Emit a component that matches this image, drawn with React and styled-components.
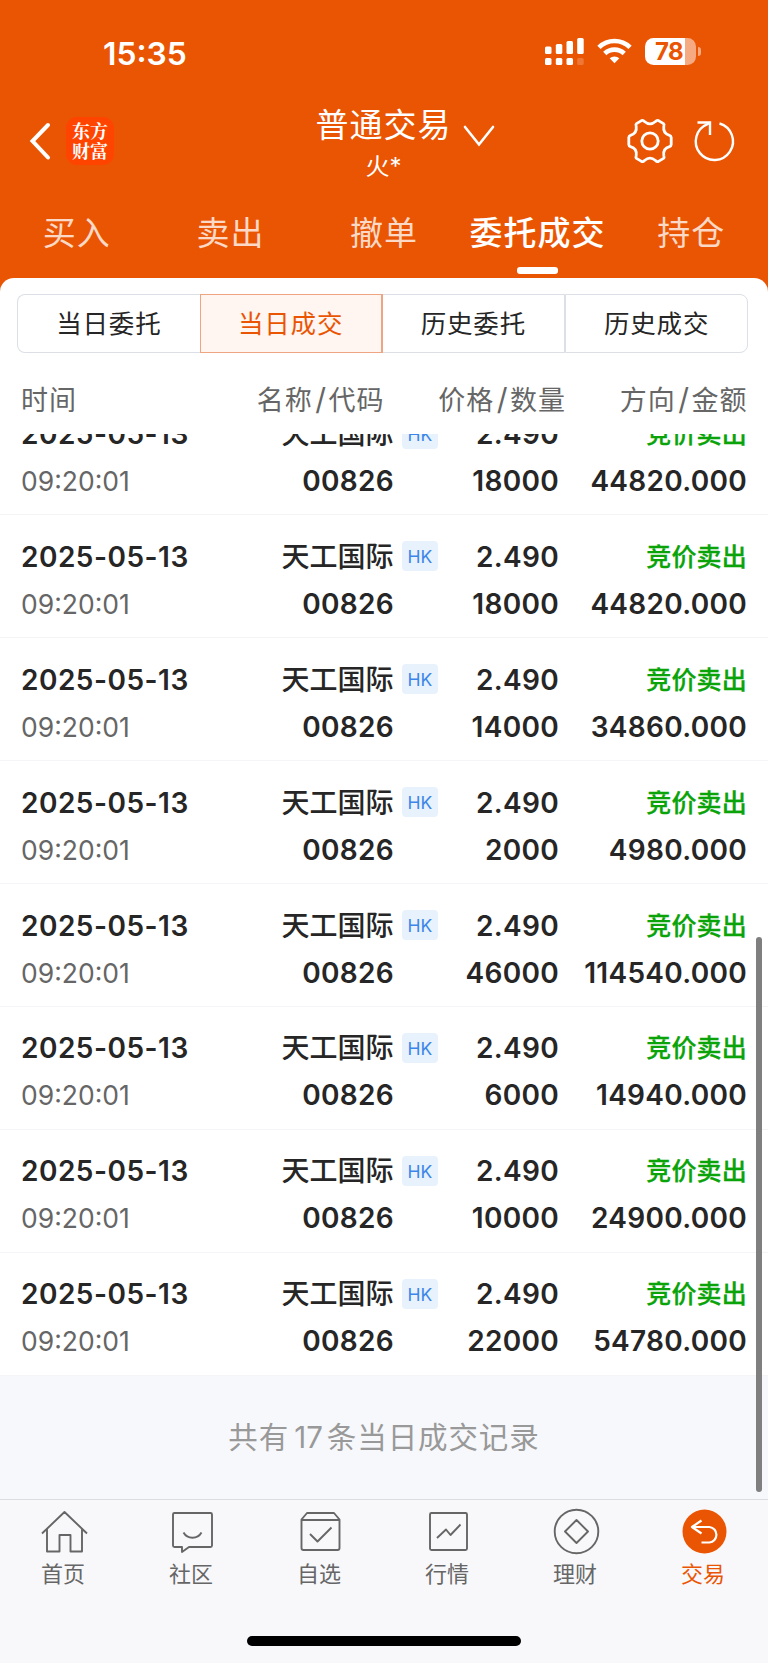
import React from "react";
import styled, { createGlobalStyle, css } from "styled-components";

const tabs = ["买入", "卖出", "撤单", "委托成交", "持仓"];
const filters = ["当日委托", "当日成交", "历史委托", "历史成交"];
const deals = [
  { amount: "18000", total: "44820.000" },
  { amount: "18000", total: "44820.000" },
  { amount: "14000", total: "34860.000" },
  { amount: "2000", total: "4980.000" },
  { amount: "46000", total: "114540.000" },
  { amount: "6000", total: "14940.000" },
  { amount: "10000", total: "24900.000" },
  { amount: "22000", total: "54780.000" },
];

const menu = [
  {
    label: "首页",
    icon: (
      <path d="M2 23.5 24.5 2 47 23.5M7 19v22.500h12.500V25h11v16.500H42V19" />
    ),
  },
  {
    label: "社区",
    icon: (
      <>
        <path d="M6.500 3h36q1.500 0 1.500 1.500v31q0 1.500-1.500 1.500H21l-7 5v-5H6.500Q5 37 5 35.500v-31Q5 3 6.500 3z" />
        <path d="M15.500 22.500c4 7 14 7 18 0" />
      </>
    ),
  },
  {
    label: "自选",
    icon: (
      <>
        <path d="M5.500 9.500 11 3h27l5.500 6.500v28.500q0 2-2 2h-34q-2 0-2-2zM5.500 10h38" />
        <path d="m14 24 7.500 7.500L35.500 17.500" />
      </>
    ),
  },
  {
    label: "行情",
    icon: (
      <>
        <rect x="6" y="3" width="37" height="37" rx="1.500" />
        <path d="m13 28 9-8.500 4.500 5.500 10-10.500" />
      </>
    ),
  },
  {
    label: "理财",
    icon: (
      <>
        <circle cx="24.500" cy="21.500" r="21.800" />
        <path d="M24.500 10 36 21.500 24.500 33 13 21.500z" />
      </>
    ),
  },
  {
    label: "交易",
    active: true,
    icon: (
      <>
        <circle cx="24.500" cy="21.500" r="22" fill="#ea5504" stroke="none" />
        <path
          d="M21.500 10.500 12 17l9.500 6.500M12 17h17.500a7.800 7.800 0 0 1 0 15.500H21.500"
          stroke="#fff"
          strokeWidth="2.200"
        />
      </>
    ),
  },
];

function StatusBar() {
  return (
    <Status>
      <Clock>15:35</Clock>
      <StatusIcons>
        <svg width="39" height="27" viewBox="0 0 39 27" fill="#fff">
          <rect x="0" y="8.500" width="6.500" height="7.500" rx="1.500" />
          <rect x="10.800" y="6" width="6.500" height="10" rx="1.500" />
          <rect x="21.500" y="3" width="6.500" height="13" rx="1.500" />
          <rect x="32.200" y="0" width="6.500" height="16" rx="1.500" />
          <rect x="0" y="20" width="6.500" height="7" rx="1.500" />
          <rect x="10.800" y="20" width="6.500" height="7" rx="1.500" />
          <rect x="21.500" y="20" width="6.500" height="7" rx="1.500" />
          <rect x="32.200" y="20" width="6.500" height="7" rx="1.500" opacity=".2" />
        </svg>
        <svg width="35" height="26" viewBox="0 0 36 26" fill="none" stroke="#fff" strokeWidth="4.800">
          <path d="M2 9.200a23 23 0 0 1 32 0" />
          <path d="M8 15.600a14.500 14.500 0 0 1 20 0" />
          <path d="M18 25.500l-5-5a7.400 7.400 0 0 1 10 0z" fill="#fff" stroke="none" />
        </svg>
        <Battery>
          <Charge>78</Charge>
        </Battery>
      </StatusIcons>
    </Status>
  );
}

function Header() {
  return (
    <Bar>
      <BarSide>
        <svg width="22" height="38" viewBox="0 0 22 38" fill="none" stroke="#fff" strokeWidth="4" strokeLinecap="round">
          <path d="M19 3 3.500 19 19 35.500" />
        </svg>
        <Logo>
          <span>东方</span>
          <span>财富</span>
        </Logo>
      </BarSide>
      <Heading>
        <div>
          <Title>普通交易</Title>
          <Account>火*</Account>
        </div>
        <svg width="32" height="22" viewBox="0 0 32 22" fill="none" stroke="#fff" strokeWidth="2.600" strokeLinecap="round">
          <path d="M2 2 16 19.500 30 2" />
        </svg>
      </Heading>
      <BarSide $end>
        <svg width="46" height="46" viewBox="0 0 46 46" fill="none" stroke="#fff" strokeWidth="2.800" strokeLinejoin="round">
          <path d="M14.500 2.600 Q16 1.800 17.500 3.500 Q23 8.300 28.500 3.500 Q30 1.800 31.500 2.600 L36.500 5.600 Q37.500 6.400 36.800 8.500 Q35.800 15.500 42.500 17.300 Q44 17.800 44.200 19.500 V26.500 Q44 28.200 42.500 28.700 Q35.800 30.500 36.800 37.500 Q37.500 39.600 36.500 40.400 L31.500 43.400 Q30 44.200 28.500 42.500 Q23 37.700 17.500 42.500 Q16 44.200 14.500 43.400 L9.500 40.400 Q8.500 39.600 9.200 37.500 Q10.200 30.500 3.500 28.700 Q2 28.200 1.800 26.500 V19.500 Q2 17.800 3.500 17.300 Q10.200 15.500 9.200 8.500 Q8.500 6.400 9.500 5.600 Z" />
          <circle cx="23" cy="23" r="8.200" />
        </svg>
        <svg width="42" height="42" viewBox="0 0 42 42" fill="none" stroke="#fff" strokeWidth="2.400">
          <path d="M25.500 3.500a18.600 18.600 0 1 1-12 .6L16 2.500" />
          <path d="M3.500 2.500h12.500V15" />
        </svg>
      </BarSide>
    </Bar>
  );
}

function Deal({ amount, total }) {
  return (
    <Row>
      <Cell $left>
        <DateText>2025-05-13</DateText>
        <Time>09:20:01</Time>
      </Cell>
      <Cell>
        <Name>
          天工国际<Market>HK</Market>
        </Name>
        <Code>00826</Code>
      </Cell>
      <Cell>
        <Strong>2.490</Strong>
        <Strong>{amount}</Strong>
      </Cell>
      <Cell>
        <Side>竞价卖出</Side>
        <Strong>{total}</Strong>
      </Cell>
    </Row>
  );
}

export default function App() {
  return (
    <Screen>
      <GlobalStyle />
      <Top>
        <StatusBar />
        <Header />
        <Tabs>
          {tabs.map((tab) => (
            <Tab key={tab} $active={tab === "委托成交"}>
              {tab}
            </Tab>
          ))}
        </Tabs>
      </Top>
      <Panel>
        <Filters>
          {filters.map((filter) => (
            <Filter key={filter} $active={filter === "当日成交"}>
              {filter}
            </Filter>
          ))}
        </Filters>
        <Columns>
          <span>时间</span>
          <span>
            名称<Slash>/</Slash>代码
          </span>
          <span>
            价格<Slash>/</Slash>数量
          </span>
          <span>
            方向<Slash>/</Slash>金额
          </span>
        </Columns>
        <Scroller>
          <List>
            {deals.map((deal, i) => (
              <Deal key={i} {...deal} />
            ))}
          </List>
          <Summary>
            共有<Count>17</Count>条当日成交记录
          </Summary>
          <Thumb />
        </Scroller>
      </Panel>
      <Menu>
        {menu.map(({ label, icon, active }) => (
          <MenuItem key={label} $active={active}>
            <svg width="49" height="45" viewBox="0 0 49 45" fill="none" stroke="currentColor" strokeWidth="1.900" strokeLinejoin="round">
              {icon}
            </svg>
            <Label>{label}</Label>
          </MenuItem>
        ))}
      </Menu>
      <Foot>
        <HomeBar />
      </Foot>
    </Screen>
  );
}

const GlobalStyle = createGlobalStyle`
  * {
    box-sizing: border-box;
  }

  body {
    margin: 0;
    font-family: Inter, "Noto Sans CJK SC", sans-serif;
    color: #262626;
  }

  svg {
    display: block;
    flex: none;
    overflow: visible;
  }
`;

const Screen = styled.div`
  display: flex;
  flex-direction: column;
  width: 768px;
  height: 1663px;
  background: #f7f8fb;
  overflow: hidden;
  white-space: nowrap;
`;

const Top = styled.header`
  height: 292px;
  flex: none;
  background: #ea5504;
  color: #fff;
`;

const Status = styled.div`
  display: flex;
  justify-content: space-between;
  height: 100px;
  padding: 38px 72px 0 103px;
`;
const Clock = styled.div`
  font-size: 31.8px;
  font-weight: 600;
  line-height: 31px;
`;
const StatusIcons = styled.div`
  display: flex;
  align-items: flex-start;
  gap: 13px;
`;
const Battery = styled.div`
  position: relative;
  width: 51px;
  height: 27px;
  border-radius: 8.5px;
  background: linear-gradient(to right, #fff 40px, #f5aa82 40px);

  &::after {
    content: "";
    position: absolute;
    right: -5px;
    top: 9px;
    width: 3px;
    height: 9px;
    border-radius: 0 4px 4px 0;
    background: #f5aa82;
  }
`;
const Charge = styled.div`
  padding-left: 10px;
  font-size: 24px;
  font-weight: 700;
  line-height: 28px;
  letter-spacing: -0.5px;
  color: #ea5504;
`;

const Bar = styled.div`
  display: grid;
  grid-template-columns: 240px 1fr 240px;
  height: 94px;
`;
const BarSide = styled.div`
  display: flex;
  align-items: center;
  height: 81px;
  gap: 15px;
  padding: 0 29px;
  ${(props) =>
    props.$end &&
    css`
      justify-content: flex-end;
      gap: 21px;
      padding-right: 32px;
    `}
`;
const Logo = styled.div`
  display: flex;
  flex-direction: column;
  justify-content: center;
  align-items: center;
  width: 48px;
  height: 48px;
  padding-bottom: 1px;
  border-radius: 11px;
  background: #ff4400;
  font-family: "Noto Serif CJK SC", "Noto Sans CJK SC", sans-serif;
  font-size: 18px;
  font-weight: 700;
  line-height: 20px;
`;
const Heading = styled.div`
  display: flex;
  justify-content: center;
  gap: 11px;
  padding: 1px 0 0 42px;
  text-align: center;

  svg {
    margin-top: 24px;
  }
`;
const Title = styled.div`
  font-size: 33px;
  line-height: 48px;
  letter-spacing: 1px;
`;
const Account = styled.div`
  font-size: 24px;
  line-height: 36px;
`;

const Tabs = styled.nav`
  display: grid;
  grid-template-columns: repeat(5, 1fr);
`;
const Tab = styled.div`
  position: relative;
  height: 80px;
  font-size: 33px;
  line-height: 78px;
  letter-spacing: 1px;
  text-align: center;
  color: #fcd9c6;
  ${(props) =>
    props.$active &&
    css`
      color: #fff;
      font-weight: 500;

      &::after {
        content: "";
        position: absolute;
        left: 56px;
        top: 73px;
        width: 41px;
        height: 7px;
        border-radius: 3px;
        background: #fff;
      }
    `}
`;

const Panel = styled.main`
  display: flex;
  flex-direction: column;
  height: 1221px;
  margin-top: -14px;
  flex: none;
  padding-top: 16px;
  border-radius: 14px 14px 0 0;
  background: #fff;
`;
const Filters = styled.div`
  display: grid;
  grid-template-columns: repeat(4, 1fr);
  height: 57.5px;
  margin: 0 20px 0.5px 17px;
`;
const Filter = styled.div`
  border: 1.5px solid #dcdfe6;
  font-size: 25.5px;
  line-height: 57px;
  letter-spacing: 0.8px;
  text-align: center;

  &:first-child {
    border-radius: 8px 0 0 8px;
    border-right: 0;
  }

  &:nth-child(3) {
    border-left: 0;
  }

  &:last-child {
    border-radius: 0 8px 8px 0;
  }
  ${(props) =>
    props.$active &&
    css`
      border-color: #f0a582;
      border-right-width: 2px;
      background: #fff5f1;
      color: #ea5504;
    `}
`;
const Columns = styled.div`
  display: grid;
  grid-template-columns: 172px 191.5px 181.5px 181.5px;
  height: 81.5px;
  padding-left: 21px;
  font-size: 27px;
  line-height: 97px;
  letter-spacing: 1px;
  text-align: right;
  color: #666;

  span:first-child {
    text-align: left;
  }
`;
const Slash = styled.i`
  margin: 0 1.5px 0 2.5px;
  font-size: 30px;
  font-style: normal;
  line-height: 1;
`;

const Scroller = styled.div`
  position: relative;
  flex: 1;
`;
const List = styled.div`
  display: flex;
  flex-direction: column;
  justify-content: flex-end;
  height: 942px;
  overflow: hidden;
`;
const Row = styled.article`
  display: grid;
  grid-template-columns: 172px 245px 121px 188px;
  flex: none;
  height: 122.88px;
  padding: 18.5px 21px 0;
  border-bottom: 1.5px solid #f5f5f7;
`;
const Cell = styled.div`
  line-height: 47px;
  font-size: 28px;
  text-align: ${(props) => (props.$left ? "left" : "right")};
`;
const Strong = styled.div`
  font-weight: 600;
  letter-spacing: 0.3px;
`;
const DateText = styled(Strong)`
  letter-spacing: 0.5px;
`;
const Time = styled.div`
  font-size: 26.5px;
  color: #666;
`;
const Name = styled.div`
  display: flex;
  align-items: center;
  justify-content: flex-end;
  gap: 8.5px;
  height: 47px;
  font-weight: 500;
`;
const Code = styled(Strong)`
  padding-right: 44px;
`;
const Market = styled.span`
  width: 36px;
  height: 30px;
  margin-bottom: 2px;
  border-radius: 4px;
  background: #e8f2fd;
  font-size: 17.5px;
  font-weight: 400;
  line-height: 31px;
  text-align: center;
  color: #3b86e8;
`;
const Side = styled.div`
  font-size: 25px;
  font-weight: 500;
  line-height: 46px;
  margin-bottom: 1px;
  letter-spacing: 0.2px;
  color: #0aa30a;
  -webkit-text-stroke: 0.3px #0aa30a;
`;
const Summary = styled.div`
  height: 123.5px;
  background: #f7f8fb;
  font-size: 29.5px;
  line-height: 123px;
  letter-spacing: 0.9px;
  text-align: center;
  color: #999;
`;
const Count = styled.span`
  margin: 0 4px 0 5px;
  letter-spacing: 0;
`;
const Thumb = styled.div`
  position: absolute;
  top: 503.5px;
  right: 6px;
  width: 6px;
  height: 555px;
  border-radius: 3px;
  background: #7f7f80;
`;

const Menu = styled.nav`
  display: grid;
  grid-template-columns: repeat(6, 1fr);
  height: 100px;
  flex: none;
  border-top: 1px solid #dcdde0;
  background: #f8f8fb;
`;
const MenuItem = styled.div`
  display: flex;
  flex-direction: column;
  align-items: center;
  padding-top: 10px;
  color: ${(props) => (props.$active ? "#ea5504" : "#666")};
`;
const Label = styled.div`
  padding-right: 2px;
  font-size: 22px;
  line-height: 38px;
`;
const Foot = styled.footer`
  flex: 1;
  padding-top: 37px;
  background: #f8f8fb;
`;
const HomeBar = styled.div`
  width: 274px;
  height: 10px;
  margin: 0 auto;
  border-radius: 5px;
  background: #000;
`;
